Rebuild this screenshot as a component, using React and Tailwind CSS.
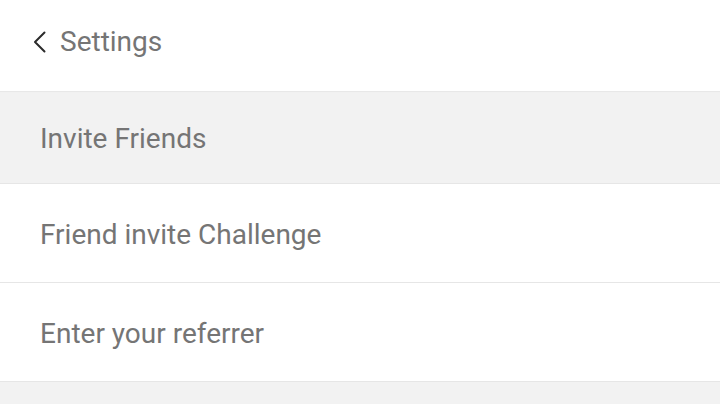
export default function App() {
  const rows = [
    { label: "Invite Friends", active: true },
    { label: "Friend invite Challenge" },
    { label: "Enter your referrer" },
  ];
  return (
    <div className="w-[720px] h-[404px] overflow-hidden bg-[#f2f2f2] font-['Roboto',sans-serif] flex flex-col">
      <div className="h-[91px] shrink-0 bg-white flex items-center pl-[32px] pb-[7px] gap-[13px] shadow-[0_1px_1px_rgba(0,0,0,0.04)] relative z-10">
        <svg width="15" height="22" viewBox="0 0 15 22" fill="none">
          <path d="M12.5 1.5 L3 11 L12.5 20.5" stroke="#2b2b2b" strokeWidth="2" strokeLinecap="round" strokeLinejoin="round" />
        </svg>
        <span className="text-[28px] text-[#757575] leading-none">Settings</span>
      </div>
      {rows.map((r, i) => (
        <div
          key={i}
          className={`${i === 0 ? "h-[93px] bg-[#f2f2f2]" : "h-[99px] bg-white"} shrink-0 flex items-center pl-[40px] pt-[4px] border-b border-[#e6e6e6]`}
        >
          <span className="text-[28px] text-[#757575] leading-none">{r.label}</span>
        </div>
      ))}
      <div className="flex-1 bg-[#f2f2f2]" />
    </div>
  );
}
